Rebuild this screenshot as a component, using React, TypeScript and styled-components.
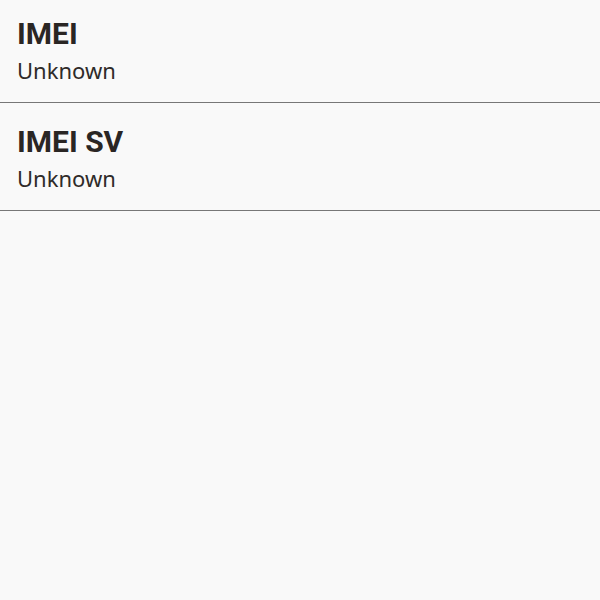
import styled, { createGlobalStyle } from 'styled-components'

const GlobalStyle = createGlobalStyle`
  html, body {
    margin: 0;
    padding: 0;
    background: #f9f9f9;
  }
  body {
    font-family: "Noto Sans", "Open Sans", sans-serif;
  }
`

const Page = styled.div`
  width: 600px;
  height: 600px;
  background: #f9f9f9;
  display: flex;
  flex-direction: column;
`

const Row = styled.div`
  height: 108px;
  box-sizing: border-box;
  padding: 21px 17px 0;
  border-bottom: 1.5px solid #777;
  display: flex;
  flex-direction: column;

  &:first-child {
    height: 103px;
    padding-top: 16px;
  }
`

const Title = styled.div`
  font-family: Roboto, "Noto Sans", sans-serif;
  font-size: 30px;
  font-weight: 700;
  color: #2a2624;
  line-height: 36px;
`

const Value = styled.div`
  font-size: 22px;
  color: #2f2b29;
  line-height: 30px;
  margin-top: 3px;
`

const items = [
  { title: 'IMEI', value: 'Unknown' },
  { title: 'IMEI SV', value: 'Unknown' },
]

function App() {
  return (
    <Page>
      <GlobalStyle />
      {items.map((item) => (
        <Row key={item.title}>
          <Title>{item.title}</Title>
          <Value>{item.value}</Value>
        </Row>
      ))}
    </Page>
  )
}

export default App
